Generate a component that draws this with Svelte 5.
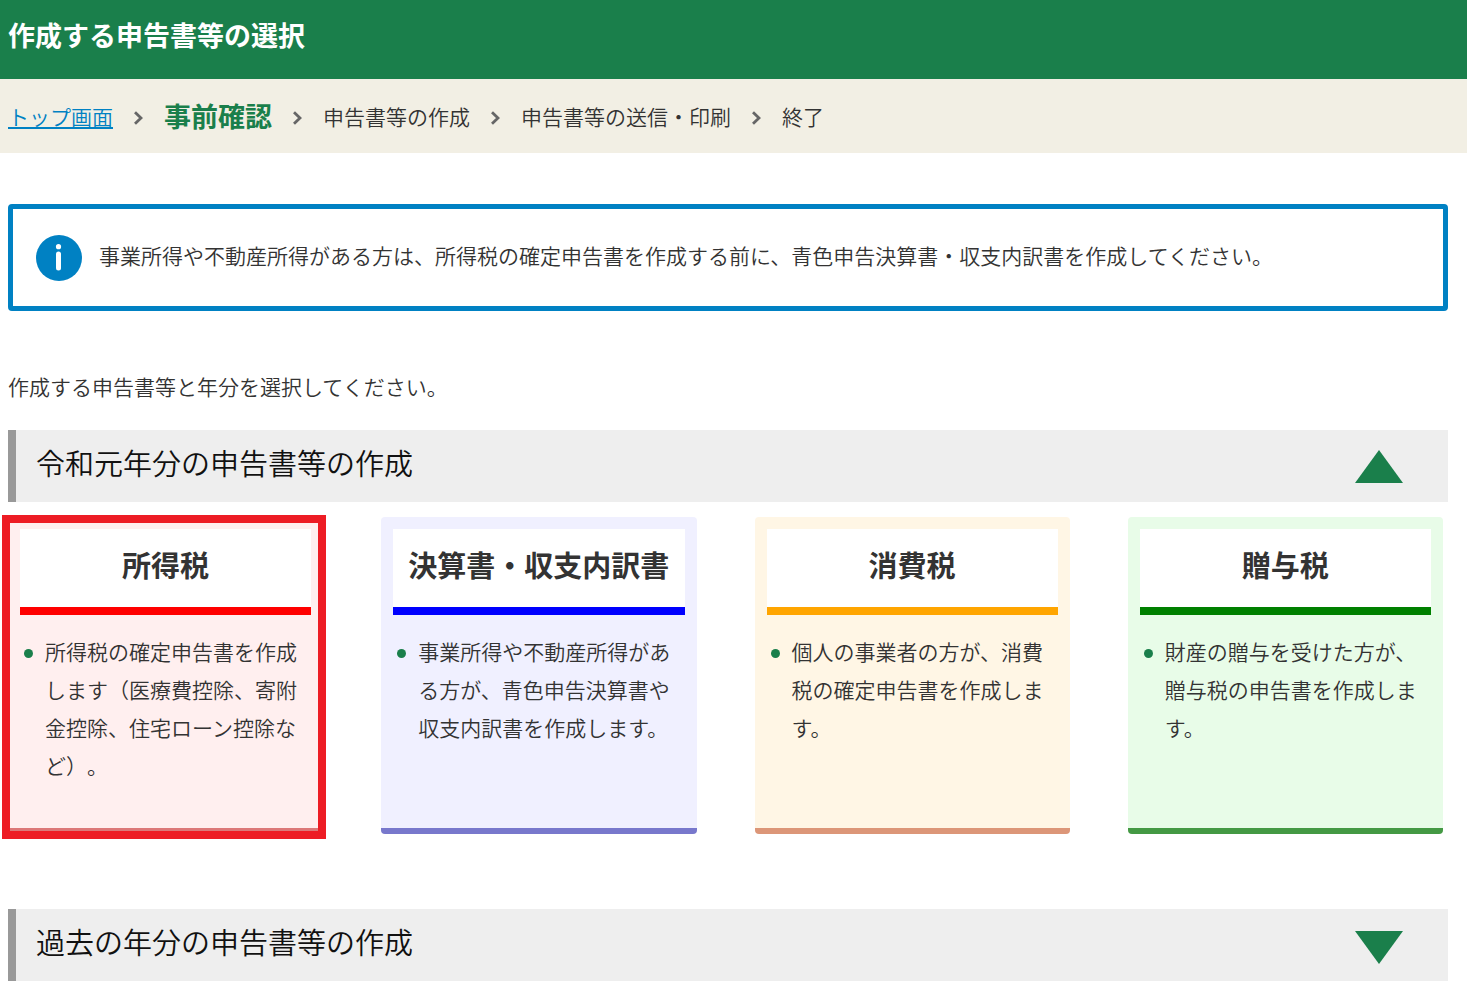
<script>
  const steps = [
    { label: 'トップ画面', href: '#top' },
    { label: '事前確認', current: true },
    { label: '申告書等の作成' },
    { label: '申告書等の送信・印刷' },
    { label: '終了' }
  ];

  const cards = [
    { kind: 'income', title: '所得税', text: '所得税の確定申告書を作成します（医療費控除、寄附金控除、住宅ローン控除など）。', selected: true },
    { kind: 'statement', title: '決算書・収支内訳書', text: '事業所得や不動産所得がある方が、青色申告決算書や収支内訳書を作成します。' },
    { kind: 'consumption', title: '消費税', text: '個人の事業者の方が、消費税の確定申告書を作成します。' },
    { kind: 'gift', title: '贈与税', text: '財産の贈与を受けた方が、贈与税の申告書を作成します。' }
  ];

  let currentOpen = $state(true);
  let pastOpen = $state(false);
</script>

{#snippet bar(label, open, toggle)}
  <h2 class="bar">
    <button type="button" aria-expanded={open} onclick={toggle}>
      <span>{label}</span>
      <svg width="48" height="35" viewBox="0 0 48 35" aria-hidden="true">
        <path d={open ? 'M24 0 48 33H0z' : 'M0 2h48L24 35z'} fill="#1a7f4b" />
      </svg>
    </button>
  </h2>
{/snippet}

<header>
  <h1>作成する申告書等の選択</h1>
</header>

<nav>
  <ol>
    {#each steps as step, i}
      <li class:current={step.current} aria-current={step.current ? 'step' : undefined}>
        {#if i > 0}
          <svg class="chevron" width="9" height="14" viewBox="0 0 9 14" aria-hidden="true">
            <path d="M1 1.2 7 7 1 12.8" fill="none" stroke="#666" stroke-width="2.8" />
          </svg>
        {/if}
        {#if step.href}<a href={step.href}>{step.label}</a>{:else}<span>{step.label}</span>{/if}
      </li>
    {/each}
  </ol>
</nav>

<main>
  <div class="info">
    <svg width="46" height="46" viewBox="0 0 46 46" aria-hidden="true">
      <circle cx="23" cy="23" r="23" fill="#0081c3" />
      <circle cx="22.5" cy="11.7" r="2.6" fill="#fff" />
      <rect x="20" y="16.5" width="5" height="19" rx="2.5" fill="#fff" />
    </svg>
    <p>事業所得や不動産所得がある方は、所得税の確定申告書を作成する前に、青色申告決算書・収支内訳書を作成してください。</p>
  </div>

  <p class="lead">作成する申告書等と年分を選択してください。</p>

  {@render bar('令和元年分の申告書等の作成', currentOpen, () => (currentOpen = !currentOpen))}
  {#if currentOpen}
    <div class="cards">
      {#each cards as card}
        <article class="card {card.kind}" class:selected={card.selected}>
          <h3>{card.title}</h3>
          <ul>
            <li>{card.text}</li>
          </ul>
        </article>
      {/each}
    </div>
  {/if}

  {@render bar('過去の年分の申告書等の作成', pastOpen, () => (pastOpen = !pastOpen))}
</main>

<style>
  :global(body) {
    margin: 0;
    background: #fff;
    color: #333;
    font: 350 21px/38px "Noto Sans CJK JP", sans-serif;
    text-spacing-trim: space-all;
  }
  h1, h2, h3, p, ol, ul {
    margin: 0;
    padding: 0;
  }
  ol, ul {
    list-style: none;
  }
  header {
    padding: 15px 8px 24px;
    background: #1a7f4b;
    color: #fff;
  }
  h1 {
    font-size: 27px;
    line-height: 40px;
    font-weight: 700;
  }
  nav {
    padding: 18px 8px;
    background: #f2efe4;
  }
  ol {
    display: flex;
    flex-wrap: wrap;
    align-items: center;
  }
  nav li {
    display: flex;
    align-items: center;
  }
  .chevron {
    margin: 4px 21px 0;
  }
  .current {
    color: #1a7f4b;
    font-size: 27px;
    font-weight: 700;
  }
  a {
    color: #0081c3;
    text-decoration: underline;
    text-decoration-thickness: 2px;
    text-underline-offset: 2px;
  }
  main {
    padding: 51px 19px 14px 8px;
  }
  .info {
    display: flex;
    align-items: center;
    gap: 17px;
    padding: 26px 23px 25px;
    border: 5px solid #0081c3;
    border-radius: 4px;
  }
  .info svg {
    flex: none;
  }
  .info p {
    margin-bottom: 6px;
  }
  .lead {
    margin: 56px 0 25px;
  }
  .bar {
    border-left: 8px solid #999;
    background: #eee;
  }
  .bar button {
    display: flex;
    align-items: flex-start;
    justify-content: space-between;
    width: 100%;
    padding: 12px 45px 17px 20px;
    border: 0;
    background: none;
    color: #111;
    font: inherit;
    font-size: 29px;
    line-height: 40px;
    font-weight: 350;
    text-align: left;
    cursor: pointer;
  }
  .bar svg {
    flex: none;
    margin-top: 8px;
  }
  .cards {
    display: grid;
    grid-template-columns: repeat(4, 1fr);
    gap: 58px;
    margin: 15px 5px 75px 0;
  }
  .card {
    position: relative;
    padding: 12px 12px 44px;
    border-bottom: 6px solid var(--edge);
    border-radius: 4px;
    background: var(--tint);
  }
  .income { --tint: #ffefef; --edge: #dc7878; --line: #f00; }
  .statement { --tint: #f0f0ff; --edge: #7878cc; --line: #00f; }
  .consumption { --tint: #fff6e5; --edge: #dc9678; --line: #ffa500; }
  .gift { --tint: #e8fce8; --edge: #449944; --line: #008000; }
  .selected::after {
    content: "";
    position: absolute;
    inset: -2px -3px -11px -6px;
    border: 8px solid #ed1c24;
  }
  h3 {
    padding: 15px 0 23px;
    border-bottom: 8px solid var(--line);
    background: #fff;
    font-size: 29px;
    line-height: 40px;
    font-weight: 700;
    text-align: center;
  }
  ul {
    margin-top: 17px;
  }
  ul li {
    display: flex;
    gap: 12px;
    padding-left: 4px;
  }
  ul li::before {
    content: "";
    flex: none;
    width: 9px;
    height: 9px;
    margin-top: 17px;
    border-radius: 50%;
    background: #1a7f4b;
  }
</style>
